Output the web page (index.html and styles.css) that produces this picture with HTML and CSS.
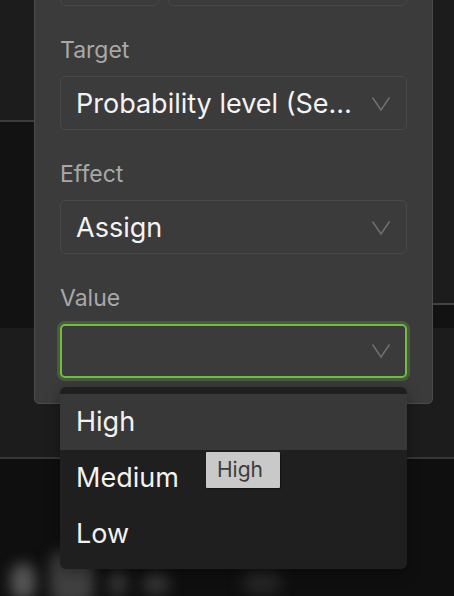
FILE: index.html
```html
<!DOCTYPE html>
<html>
<head>
<meta charset="utf-8">
<link rel="stylesheet" href="styles.css">
</head>
<body>
<div class="backdrop">
  <div class="top-zone">
    <div class="side side-left"><div class="pane pane-left"></div></div>
    <div class="mid"></div>
    <div class="side side-right"><div class="pane pane-right"></div></div>
  </div>
  <div class="band"></div>
  <div class="bottom">
    <div class="blob blob1"></div>
    <div class="blob blob2"></div>
    <div class="blob blob3"></div>
    <div class="blob blob4"></div>
    <div class="blob blob5"></div>
  </div>
</div>

<div class="panel">
  <div class="top-row">
    <div class="box box-small"></div>
    <div class="box box-wide"></div>
  </div>

  <div class="field">
    <div class="label">Target</div>
    <div class="select">
      <span class="select-text">Probability level (Se…</span>
      <svg class="chev" width="20" height="16" viewBox="0 0 20 16"><polyline points="1.5,1.5 10,14 18.5,1.5" fill="none" stroke="#727272" stroke-width="1.4"/></svg>
    </div>
  </div>

  <div class="field">
    <div class="label">Effect</div>
    <div class="select">
      <span class="select-text">Assign</span>
      <svg class="chev" width="20" height="16" viewBox="0 0 20 16"><polyline points="1.5,1.5 10,14 18.5,1.5" fill="none" stroke="#727272" stroke-width="1.4"/></svg>
    </div>
  </div>

  <div class="field">
    <div class="label">Value</div>
    <div class="select select-focus">
      <span class="select-text"></span>
      <svg class="chev" width="20" height="16" viewBox="0 0 20 16"><polyline points="1.5,1.5 10,14 18.5,1.5" fill="none" stroke="#727272" stroke-width="1.4"/></svg>
    </div>
  </div>
</div>

<div class="menu">
  <div class="menu-item active">High</div>
  <div class="menu-item">Medium</div>
  <div class="menu-item">Low</div>
</div>

<div class="tooltip">High</div>
</body>
</html>
```
FILE: styles.css
```css
* { box-sizing: border-box; }
html, body { margin: 0; padding: 0; }
body {
  width: 454px;
  height: 596px;
  overflow: hidden;
  position: relative;
  background: #111;
  font-family: Inter, "Noto Sans", sans-serif;
}

.backdrop {
  display: flex;
  flex-direction: column;
  height: 596px;
}
.top-zone {
  height: 328px;
  display: grid;
  grid-template-columns: 34px 1fr 21px;
}
.side { background: #121212; }
.mid { background: #121212; }
.pane { background: #1c1c1c; }
.pane-left { height: 122px; border-bottom: 2px solid #3b3b3b; }
.pane-right { height: 305px; border-bottom: 2px solid #434343; }

.band {
  height: 131px;
  background: #1c1c1c;
  border-bottom: 2px solid #363636;
}
.bottom {
  flex: 1;
  position: relative;
  background: #0f0f0f;
  overflow: hidden;
}
.blob {
  position: absolute;
  border-radius: 50%;
  filter: blur(7px);
}
.blob1 { left: 10px; top: 104px; width: 26px; height: 38px; background: #555; }
.blob2 { left: 50px; top: 92px; width: 44px; height: 54px; background: #404040; border-radius: 14px; }
.blob3 { left: 108px; top: 110px; width: 20px; height: 28px; background: #333; }
.blob4 { left: 142px; top: 114px; width: 28px; height: 22px; background: #353535; }
.blob5 { left: 242px; top: 110px; width: 40px; height: 26px; background: #252525; }

.panel {
  position: absolute;
  left: 34px;
  top: -70px;
  width: 399px;
  background: #3b3b3b;
  border: 1px solid #4b4b4b;
  border-radius: 5px;
  padding: 21px 25px 25px 25px;
  display: flex;
  flex-direction: column;
  gap: 30px;
}
.top-row {
  display: flex;
  gap: 9px;
}
.box {
  height: 54px;
  border: 1px solid #484848;
  border-radius: 5px;
}
.box-small { width: 99px; }
.box-wide { flex: 1; }

.field {
  display: flex;
  flex-direction: column;
  gap: 12px;
}
.label {
  font-size: 23px;
  line-height: 28px;
  color: #a8a8a8;
}
.select {
  height: 54px;
  border: 1px solid #484848;
  border-radius: 5px;
  padding: 1px 15px 0 15px;
  display: flex;
  align-items: center;
  justify-content: space-between;
}
.select-text {
  font-size: 27px;
  color: #f3f3f3;
  white-space: nowrap;
}
.chev { display: block; flex: none; }
.select-focus {
  border: 2px solid #6fbf3e;
  padding: 0 14px 0 14px;
  box-shadow: 0 0 0 3px #4a5b3f;
}

.menu {
  position: absolute;
  left: 60px;
  top: 387px;
  width: 347px;
  background: #1f1f1f;
  border-radius: 6px;
  padding: 7px 0;
  box-shadow: 0 4px 14px rgba(0,0,0,0.35);
}
.menu-item {
  height: 56px;
  line-height: 56px;
  padding-left: 16px;
  font-size: 27px;
  color: #f2f2f2;
}
.menu-item.active { background: #383838; }

.tooltip {
  position: absolute;
  left: 206px;
  top: 452px;
  width: 74px;
  height: 36px;
  padding-left: 11px;
  background: #c9c9c9;
  color: #3c3c3c;
  font-size: 21px;
  line-height: 36px;
  border-radius: 1px;
  box-shadow: 1px 1px 1px rgba(0,0,0,0.4);
}
```
